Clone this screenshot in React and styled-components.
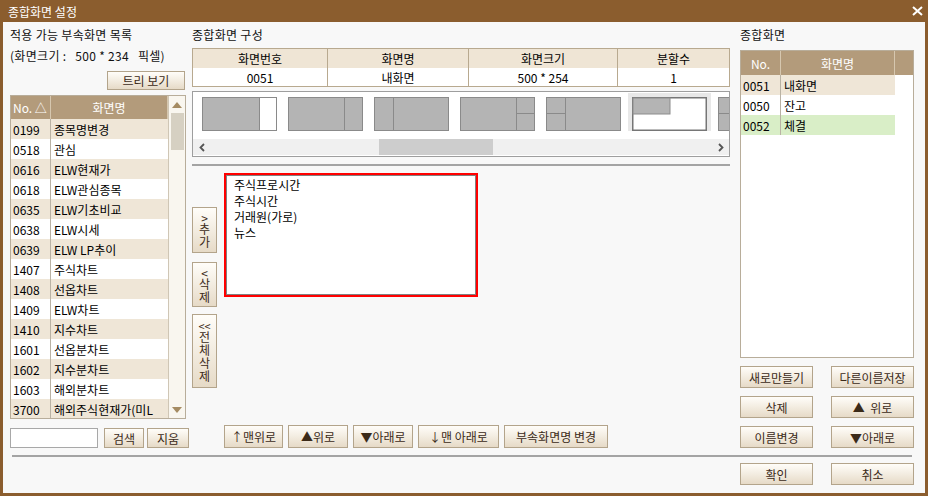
import React from "react";
import styled, { createGlobalStyle } from "styled-components";

const FONT = `"Noto Sans CJK KR", "Noto Sans", sans-serif`;

const GlobalStyle = createGlobalStyle`
  html, body {
    margin: 0;
    padding: 0;
    background: #fff;
  }
  body {
    font-family: ${FONT};
    font-size: 12px;
    color: #111;
  }
  * { box-sizing: border-box; }
`;

const leftRows = [
  ["0199", "종목명변경"],
  ["0518", "관심"],
  ["0616", "ELW현재가"],
  ["0618", "ELW관심종목"],
  ["0635", "ELW기초비교"],
  ["0638", "ELW시세"],
  ["0639", "ELW LP추이"],
  ["1407", "주식차트"],
  ["1408", "선옵차트"],
  ["1409", "ELW차트"],
  ["1410", "지수차트"],
  ["1601", "선옵분차트"],
  ["1602", "지수분차트"],
  ["1603", "해외분차트"],
  ["3700", "해외주식현재가(미L"],
];

const rightRows = [
  ["0051", "내화면", "#efe6d7"],
  ["0050", "잔고", "#ffffff"],
  ["0052", "체결", "#d9eec7"],
];

const subScreens = ["주식프로시간", "주식시간", "거래원(가로)", "뉴스"];

const Thumb = ({ kind }) => {
  const grey = "#b4b4b4";
  const line = "#8a8a8a";
  if (kind === 6) {
    return (
      <svg width="75" height="34" viewBox="0 0 75 34">
        <rect x="0.75" y="0.75" width="73.5" height="32.5" fill="#fff" stroke="#767676" strokeWidth="1.5" />
        <rect x="1" y="1" width="37" height="16" fill={grey} stroke="#8c8c8c" strokeWidth="1" />
      </svg>
    );
  }
  return (
    <svg width="75" height="34" viewBox="0 0 75 34">
      <rect x="0.5" y="0.5" width="74" height="33" fill={grey} stroke={line} />
      {kind === 1 && <rect x="57.5" y="0.5" width="17" height="33" fill="#fff" stroke={line} />}
      {(kind === 2 || kind === 4) && <line x1="56.5" y1="0" x2="56.5" y2="34" stroke={line} />}
      {kind === 4 && <line x1="56" y1="16.5" x2="75" y2="16.5" stroke={line} />}
      {(kind === 3 || kind === 5) && <line x1="19.5" y1="0" x2="19.5" y2="34" stroke={line} />}
      {kind === 5 && <line x1="0" y1="16.5" x2="19.5" y2="16.5" stroke={line} />}
    </svg>
  );
};

const Chevron = ({ dir }) => (
  <svg width="6" height="9" viewBox="0 0 6 9">
    <path
      d={dir === "left" ? "M5 1 L1.5 4.5 L5 8" : "M1 1 L4.5 4.5 L1 8"}
      fill="none"
      stroke="#555"
      strokeWidth="1.8"
    />
  </svg>
);

const App = () => {
  return (
    <>
      <GlobalStyle />
      <Window>
        <TitleBar>
          <span>종합화면 설정</span>
          <svg width="11" height="10" viewBox="0 0 11 10">
            <path d="M1 1 L10 9 M10 1 L1 9" stroke="#fff" strokeWidth="2" />
          </svg>
        </TitleBar>

        <Body>
          <Main>
            <LeftCol>
              <Label>적용 가능 부속화면 목록</Label>
              <SizeInfo>(화면크기 :&nbsp;&nbsp;&nbsp;500 * 234&nbsp;&nbsp;&nbsp;픽셀)</SizeInfo>
              <TreeButton>트리 보기</TreeButton>
              <ListBox $height={324} $mt={5}>
                <ListInner>
                  <ListHeader $height={23}>
                    <HeadCell $width={40} $align="left">No. △</HeadCell>
                    <HeadCell $flex>화면명</HeadCell>
                  </ListHeader>
                  {leftRows.map(([no, name], i) => (
                    <Row key={no} $bg={i % 2 === 0 ? "#efe6d7" : "#ffffff"}>
                      <NoCell>{no}</NoCell>
                      <NameCell>{name}</NameCell>
                    </Row>
                  ))}
                </ListInner>
                <VScroll>
                  <ArrowBox>
                    <TriUp />
                  </ArrowBox>
                  <VThumb />
                  <VSpacer />
                  <ArrowBox>
                    <TriDown />
                  </ArrowBox>
                </VScroll>
              </ListBox>
              <SearchRow>
                <SearchInput />
                <Button $w={40} $h={20}>검색</Button>
                <Button $w={42} $h={20}>지움</Button>
              </SearchRow>
            </LeftCol>

            <MidCol>
              <Label>종합화면 구성</Label>
              <InfoTable>
                <TableRow $head>
                  <Cell $w={134}>화면번호</Cell>
                  <Cell $w={141} $divider>화면명</Cell>
                  <Cell $w={149} $divider>화면크기</Cell>
                  <Cell $w={112} $divider>분할수</Cell>
                </TableRow>
                <TableRow>
                  <Cell $w={134}>0051</Cell>
                  <Cell $w={141} $divider>내화면</Cell>
                  <Cell $w={149} $divider>500 * 254</Cell>
                  <Cell $w={112} $divider>1</Cell>
                </TableRow>
              </InfoTable>

              <Strip>
                <ThumbRow>
                  {[1, 2, 3, 4, 5, 6, 5].map((k, i) => (
                    <ThumbSlot key={i} $selected={i === 5}>
                      <Thumb kind={k} />
                    </ThumbSlot>
                  ))}
                </ThumbRow>
                <HScroll>
                  <HArrow>
                    <Chevron dir="left" />
                  </HArrow>
                  <HThumb />
                  <VSpacer />
                  <HArrow>
                    <Chevron dir="right" />
                  </HArrow>
                </HScroll>
              </Strip>

              <Rule />

              <EditRow>
                <SideCol>
                  <SideButton $h={46}>
                    <Combo>&gt;</Combo>추가
                  </SideButton>
                  <SideButton $h={45} $mt={9}>
                    <Combo>&lt;</Combo>삭제
                  </SideButton>
                  <SideButton $h={74} $mt={7}>
                    <Combo>&lt;&lt;</Combo>전체삭제
                  </SideButton>
                </SideCol>
                <RedBox>
                  {subScreens.map((s) => (
                    <div key={s}>{s}</div>
                  ))}
                </RedBox>
              </EditRow>

              <BottomBar>
                <Button $w={59} $h={23}>↑맨위로</Button>
                <Button $w={60} $h={23}>▲위로</Button>
                <Button $w={60} $h={23}>▼아래로</Button>
                <Button $w={81} $h={23}>↓맨 아래로</Button>
                <Button $w={104} $h={23}>부속화면명 변경</Button>
              </BottomBar>
            </MidCol>

            <RightCol>
              <Label>종합화면</Label>
              <ListBox $height={308} $mt={8}>
                <ListInner>
                  <ListHeader $height={24}>
                    <HeadCell $width={40}>No.</HeadCell>
                    <HeadCell $width={114}>화면명</HeadCell>
                    <HeadCell $flex $last />
                  </ListHeader>
                  {rightRows.map(([no, name, bg]) => (
                    <Row key={no} $bg={bg} $width={154}>
                      <NoCell>{no}</NoCell>
                      <NameCell>{name}</NameCell>
                    </Row>
                  ))}
                </ListInner>
              </ListBox>
              <ButtonGrid>
                <Button $h={22}>새로만들기</Button>
                <Button $h={22}>다른이름저장</Button>
                <Button $h={22}>삭제</Button>
                <Button $h={22}>▲&nbsp;&nbsp;위로</Button>
                <Button $h={22}>이름변경</Button>
                <Button $h={22}>▼아래로</Button>
              </ButtonGrid>
            </RightCol>
          </Main>

          <Rule $footer />

          <Footer>
            <Button $w={73} $h={22}>확인</Button>
            <Button $w={83} $h={22}>취소</Button>
          </Footer>
        </Body>
      </Window>
    </>
  );
};

const Window = styled.div`
  width: 928px;
  height: 496px;
  background: #8b5d2e;
  padding: 0 3px 3px;
  display: flex;
  flex-direction: column;
`;

const TitleBar = styled.div`
  height: 22px;
  flex-shrink: 0;
  display: flex;
  align-items: center;
  justify-content: space-between;
  padding: 0 2px 0 5px;
  color: #fff;
  font-size: 12px;
`;

const Body = styled.div`
  flex: 1;
  background: #f8f8f8;
  padding: 6px 11px 0 7px;
  display: flex;
  flex-direction: column;
`;

const Main = styled.div`
  display: flex;
  height: 420px;
`;

const LeftCol = styled.div`
  width: 176px;
  display: flex;
  flex-direction: column;
`;

const MidCol = styled.div`
  width: 538px;
  margin-left: 6px;
  display: flex;
  flex-direction: column;
`;

const RightCol = styled.div`
  width: 174px;
  margin-left: 10px;
  display: flex;
  flex-direction: column;
`;

const Label = styled.div`
  height: 14px;
  line-height: 14px;
  white-space: nowrap;
  color: #111;
  letter-spacing: 0.3px;
`;

const SizeInfo = styled(Label)`
  margin-top: 7px;
`;

const Button = styled.button`
  width: ${(p) => (p.$w ? `${p.$w}px` : "auto")};
  height: ${(p) => p.$h}px;
  padding: 0;
  margin: 0;
  border: 1px solid #b3a48b;
  background: linear-gradient(to bottom, #fffdf9 0%, #f4eee3 45%, #e6dac7 100%);
  color: #3b2a18;
  font-family: ${FONT};
  font-size: 12px;
  display: flex;
  align-items: center;
  justify-content: center;
  white-space: nowrap;
  flex-shrink: 0;
`;

const TreeButton = styled(Button)`
  width: 78px;
  height: 19px;
  margin-top: 8px;
  align-self: flex-end;
  margin-right: 1px;
`;

const ListBox = styled.div`
  height: ${(p) => p.$height}px;
  margin-top: ${(p) => p.$mt}px;
  border: 1px solid #b8ad9a;
  background: #fff;
  display: flex;
  overflow: hidden;
`;

const ListInner = styled.div`
  flex: 1;
  display: flex;
  flex-direction: column;
  overflow: hidden;
`;

const ListHeader = styled.div`
  height: ${(p) => p.$height}px;
  flex-shrink: 0;
  display: flex;
  background: #b39b7b;
  color: #fff;
  font-size: 12px;
`;

const HeadCell = styled.div`
  width: ${(p) => (p.$width ? `${p.$width}px` : "auto")};
  flex: ${(p) => (p.$flex ? 1 : "none")};
  display: flex;
  align-items: center;
  justify-content: ${(p) => (p.$align === "left" ? "flex-start" : "center")};
  padding-left: ${(p) => (p.$align === "left" ? "2px" : "0")};
  border-right: ${(p) => (p.$last ? "none" : "1px solid #d6c7af")};
  white-space: nowrap;
`;

const Row = styled.div`
  height: 20px;
  flex-shrink: 0;
  width: ${(p) => (p.$width ? `${p.$width}px` : "auto")};
  display: flex;
  align-items: center;
  background: ${(p) => p.$bg};
  color: #000;
`;

const NoCell = styled.div`
  width: 40px;
  height: 100%;
  display: flex;
  align-items: center;
  padding-left: 2px;
  border-right: 1px solid #b9b2a4;
`;

const NameCell = styled.div`
  flex: 1;
  padding-left: 3px;
  white-space: nowrap;
  overflow: hidden;
`;

const VScroll = styled.div`
  width: 17px;
  background: #f9f6ef;
  border-left: 1px solid #cfc6b5;
  display: flex;
  flex-direction: column;
  align-items: center;
`;

const ArrowBox = styled.div`
  height: 17px;
  width: 100%;
  display: flex;
  align-items: center;
  justify-content: center;
`;

const TriUp = styled.div`
  width: 0;
  height: 0;
  border-left: 5px solid transparent;
  border-right: 5px solid transparent;
  border-bottom: 6px solid #a58b62;
`;

const TriDown = styled(TriUp)`
  border-bottom: none;
  border-top: 6px solid #a58b62;
`;

const VThumb = styled.div`
  width: 13px;
  height: 37px;
  background: #d6d0c2;
`;

const VSpacer = styled.div`
  flex: 1;
`;

const SearchRow = styled.div`
  margin-top: auto;
  height: 20px;
  display: flex;
  gap: 3px;
`;

const SearchInput = styled.input`
  width: 88px;
  height: 20px;
  border: 1px solid #a8a8a8;
  background: #fff;
  margin: 0 3px 0 0;
  padding: 0;
`;

const InfoTable = styled.div`
  margin-top: 6px;
  border: 1px solid #b8a98f;
  display: flex;
  flex-direction: column;
`;

const TableRow = styled.div`
  display: flex;
  height: ${(p) => (p.$head ? 19 : 18)}px;
  background: ${(p) => (p.$head ? "#efe5d5" : "#fff")};
  color: #000;
`;

const Cell = styled.div`
  width: ${(p) => p.$w}px;
  border-left: ${(p) => (p.$divider ? "1px solid #b8a98f" : "none")};
  display: flex;
  align-items: center;
  justify-content: center;
  white-space: nowrap;
`;

const Strip = styled.div`
  margin-top: 4px;
  height: 66px;
  border: 1px solid #9e9e9e;
  background: #fff;
  display: flex;
  flex-direction: column;
  overflow: hidden;
`;

const ThumbRow = styled.div`
  display: flex;
  gap: 11px;
  padding: 5px 0 0 9px;
  height: 39px;
  overflow: hidden;
  flex-shrink: 0;
`;

const ThumbSlot = styled.div`
  width: 75px;
  height: 34px;
  flex-shrink: 0;
  display: flex;
  box-shadow: ${(p) => (p.$selected ? "0 0 0 4px #e8e8e8" : "none")};
  background: ${(p) => (p.$selected ? "#e8e8e8" : "transparent")};
`;

const HScroll = styled.div`
  margin-top: 8px;
  height: 16px;
  background: #f0f0f0;
  display: flex;
  align-items: center;
`;

const HArrow = styled.div`
  width: 17px;
  height: 100%;
  display: flex;
  align-items: center;
  justify-content: center;
`;

const HThumb = styled.div`
  margin-left: 169px;
  width: 114px;
  height: 100%;
  background: #cdcdcd;
`;

const Rule = styled.div`
  height: 2px;
  flex-shrink: 0;
  background: #a4a4a4;
  margin: ${(p) => (p.$footer ? "7px 2px 0 2px" : "7px 0 0")};
`;

const EditRow = styled.div`
  margin-top: 7px;
  display: flex;
  align-items: flex-start;
`;

const SideCol = styled.div`
  width: 25px;
  margin-top: 34px;
  display: flex;
  flex-direction: column;
`;

const SideButton = styled(Button)`
  width: 25px;
  height: ${(p) => p.$h}px;
  margin-top: ${(p) => p.$mt || 0}px;
  writing-mode: vertical-rl;
  text-orientation: upright;
  letter-spacing: 1px;
  line-height: 25px;
`;

const Combo = styled.span`
  text-combine-upright: all;
  letter-spacing: 0;
`;

const RedBox = styled.div`
  margin-left: 7px;
  width: 254px;
  height: 124px;
  border: 2px solid #ff0000;
  box-shadow: inset 0 0 0 1px #808080;
  background: #fff;
  padding: 2px 0 0 8px;
  line-height: 16px;
  color: #000;
`;

const BottomBar = styled.div`
  margin-top: auto;
  padding-left: 32px;
  display: flex;
  gap: 5px;
`;

const ButtonGrid = styled.div`
  margin-top: 8px;
  display: grid;
  grid-template-columns: 73px 83px;
  column-gap: 18px;
  row-gap: 8px;
`;

const Footer = styled.div`
  margin-top: 6px;
  display: flex;
  justify-content: flex-end;
  gap: 18px;
`;

export default App;
